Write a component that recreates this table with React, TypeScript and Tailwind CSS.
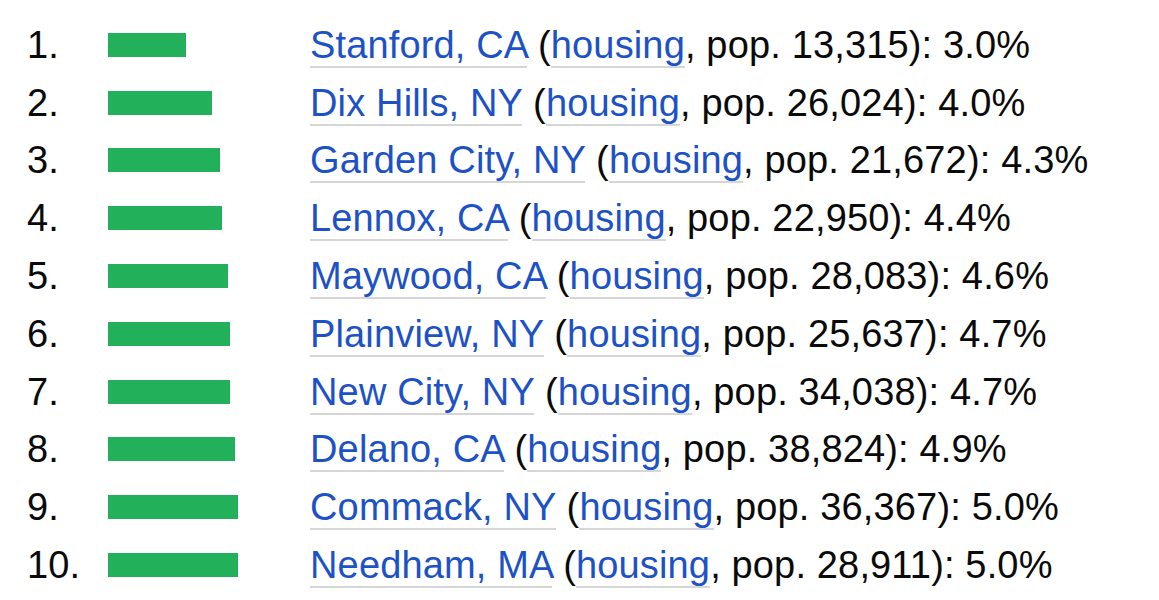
import React from 'react';

interface Row {
  city: string;
  pop: string;
  pct: number;
}

const rows: Row[] = [
  { city: 'Stanford, CA', pop: '13,315', pct: 3.0 },
  { city: 'Dix Hills, NY', pop: '26,024', pct: 4.0 },
  { city: 'Garden City, NY', pop: '21,672', pct: 4.3 },
  { city: 'Lennox, CA', pop: '22,950', pct: 4.4 },
  { city: 'Maywood, CA', pop: '28,083', pct: 4.6 },
  { city: 'Plainview, NY', pop: '25,637', pct: 4.7 },
  { city: 'New City, NY', pop: '34,038', pct: 4.7 },
  { city: 'Delano, CA', pop: '38,824', pct: 4.9 },
  { city: 'Commack, NY', pop: '36,367', pct: 5.0 },
  { city: 'Needham, MA', pop: '28,911', pct: 5.0 },
];

function Link({ children }: { children: React.ReactNode }) {
  return (
    <span className="text-[#1d52c6] border-b-2 border-[#d6d6d6] pb-0">{children}</span>
  );
}

export default function App() {
  return (
    <div
      className="w-[1159px] h-[600px] bg-white pt-[16px] text-[#0a0a0a] text-[38px] tracking-[0.15px] overflow-hidden"
      style={{ fontFamily: '"Liberation Sans", Arial, sans-serif' }}
    >
      {rows.map((r, i) => (
        <div key={i} className="flex items-center h-[57.8px] leading-none whitespace-nowrap">
          <div className="w-[108px] pl-[27px]">{i + 1}.</div>
          <div className="w-[202px]">
            <div className="h-[24px] bg-[#22b05b]" style={{ width: Math.round(r.pct * 26) }} />
          </div>
          <div>
            <Link>{r.city}</Link> (<Link>housing</Link>, pop. {r.pop}): {r.pct.toFixed(1)}%
          </div>
        </div>
      ))}
    </div>
  );
}
